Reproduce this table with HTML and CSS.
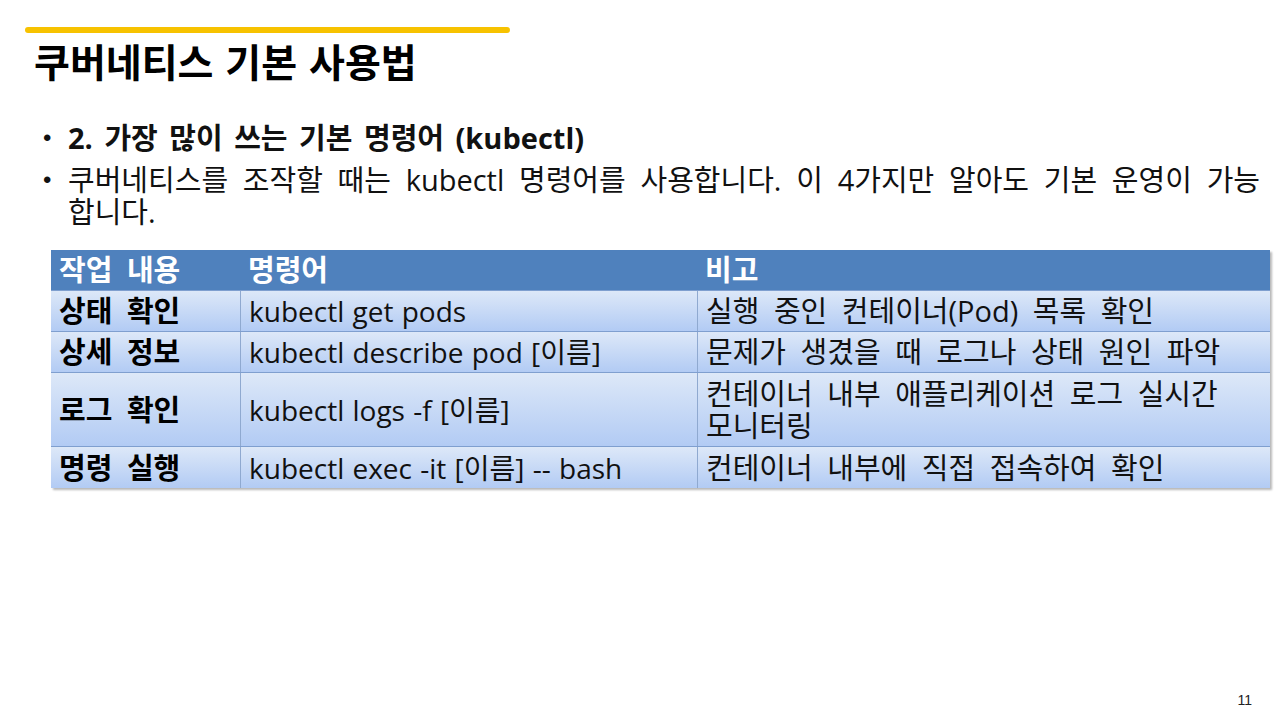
FILE: index.html
```html
<!DOCTYPE html>
<html lang="ko">
<head>
<meta charset="utf-8">
<title>쿠버네티스 기본 사용법</title>
<link rel="stylesheet" href="styles.css">
</head>
<body>
<div class="slide">
  <div class="accent"></div>
  <h1 class="title">쿠버네티스 기본 사용법</h1>
  <ul class="bullets">
    <li class="strong">2. 가장 많이 쓰는 기본 명령어 (kubectl)</li>
    <li><span class="jline">쿠버네티스를 조작할 때는 kubectl 명령어를 사용합니다. 이 4가지만 알아도 기본 운영이 가능</span>합니다.</li>
  </ul>
  <div class="table">
    <div class="row head">
      <div class="cell c1">작업 내용</div>
      <div class="cell c2">명령어</div>
      <div class="cell c3">비고</div>
    </div>
    <div class="row">
      <div class="cell c1 b">상태 확인</div>
      <div class="cell c2">kubectl get pods</div>
      <div class="cell c3">실행 중인 컨테이너(Pod) 목록 확인</div>
    </div>
    <div class="row">
      <div class="cell c1 b">상세 정보</div>
      <div class="cell c2">kubectl describe pod [이름]</div>
      <div class="cell c3">문제가 생겼을 때 로그나 상태 원인 파악</div>
    </div>
    <div class="row tall">
      <div class="cell c1 b">로그 확인</div>
      <div class="cell c2">kubectl logs -f [이름]</div>
      <div class="cell c3">컨테이너 내부 애플리케이션 로그 실시간<br>모니터링</div>
    </div>
    <div class="row last">
      <div class="cell c1 b">명령 실행</div>
      <div class="cell c2">kubectl exec -it [이름] -- bash</div>
      <div class="cell c3">컨테이너 내부에 직접 접속하여 확인</div>
    </div>
  </div>
  <div class="pagenum">11</div>
</div>
</body>
</html>
```

FILE: styles.css
```css
html, body {
  margin: 0;
  padding: 0;
  background: #ffffff;
}
.slide {
  position: relative;
  width: 1280px;
  height: 720px;
  overflow: hidden;
  font-family: "Open Sans", "Noto Sans CJK KR", sans-serif;
  color: #111111;
}
.accent {
  margin: 27px 0 0 25px;
  width: 485px;
  height: 6px;
  border-radius: 3px;
  background: #f7c200;
}
.title {
  margin: 4px 0 0 34px;
  font-family: "Noto Sans CJK KR", sans-serif;
  font-size: 39px;
  font-weight: 700;
  line-height: 46px;
  word-spacing: 1px;
  color: #000000;
}
.bullets {
  list-style: none;
  margin: 39px 0 0 0;
  padding: 0 20px 0 68px;
  font-size: 29px;
  line-height: 32px;
  word-spacing: 4px;
}
.bullets li {
  position: relative;
  margin-bottom: 10px;
}
.bullets li:last-child {
  margin-bottom: 0;
}
.bullets li::before {
  content: "•";
  position: absolute;
  left: -25px;
  top: 0;
  font-family: "Liberation Sans", sans-serif;
  font-size: 24px;
  font-weight: 400;
}
.bullets .strong {
  font-weight: 700;
}
.jline {
  display: block;
  white-space: nowrap;
  text-align: justify;
  text-align-last: justify;
  word-spacing: 0;
}
.table {
  margin: 22px 0 0 51px;
  width: 1219px;
  box-shadow: 2px 2px 2px rgba(0, 0, 0, 0.28);
  font-size: 29px;
}
.row {
  display: grid;
  grid-template-columns: 189px 457px 573px;
  height: 40px;
  background: linear-gradient(#dde8f8, #b2cbf4);
  border-top: 1px solid #7f9fcf;
}
.row.head {
  background: #4f81bd;
  border-top: none;
  color: #ffffff;
  font-weight: 700;
}
.row.tall {
  height: 73px;
}
.row.last {
  height: 41px;
}
.cell {
  display: flex;
  flex-direction: column;
  justify-content: center;
  padding: 0 8px;
  line-height: 32px;
  white-space: nowrap;
  word-spacing: 7px;
}
.cell.c2 {
  font-size: 28px;
  word-spacing: 1px;
}
.row.head .cell.c2 {
  font-size: 29px;
}
.row:not(.head) .cell + .cell {
  border-left: 1px solid #8fa9d0;
}
.cell.b {
  font-weight: 700;
  color: #000000;
}
.pagenum {
  position: absolute;
  right: 28px;
  bottom: 12px;
  font-family: "Liberation Sans", sans-serif;
  font-size: 14px;
  color: #222222;
}
```
